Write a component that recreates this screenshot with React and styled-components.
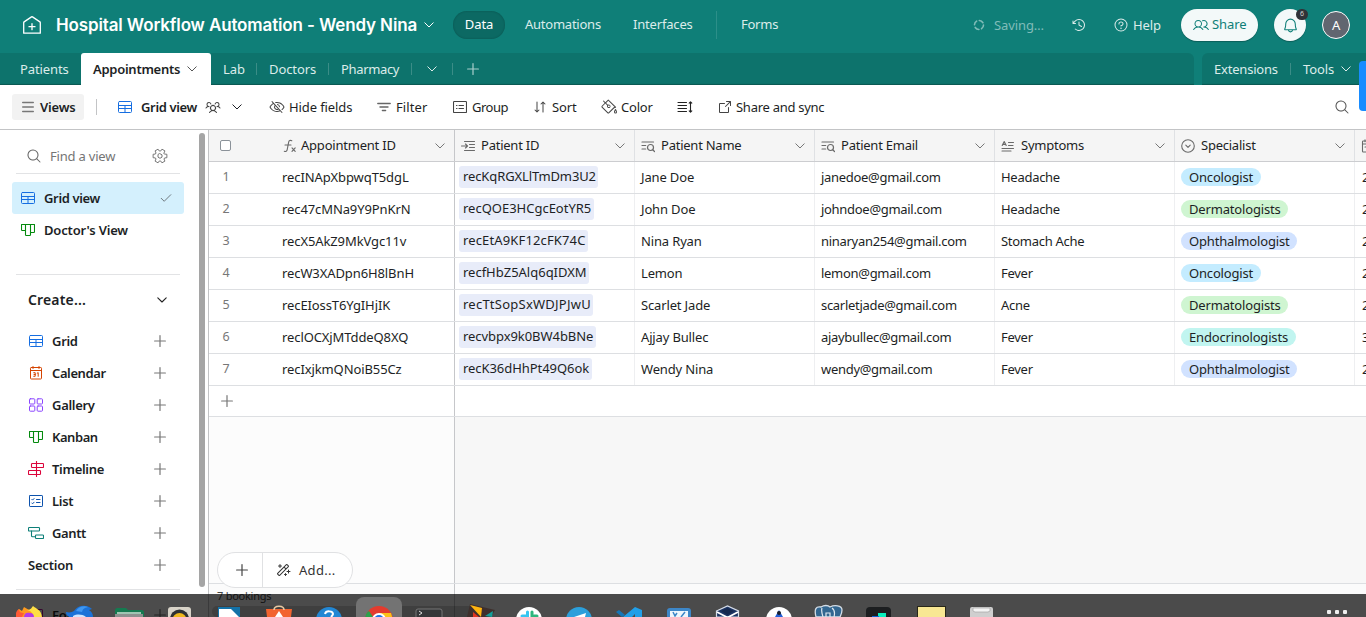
import React from "react";
import styled, { createGlobalStyle, css } from "styled-components";
import {
  PiClockCounterClockwise, PiQuestion, PiBell, PiUsers, PiUsersThree, PiEyeSlash,
  PiPaintBucket, PiMagnifyingGlass, PiArrowSquareOut, PiArrowsDownUp, PiMagicWand,
} from "react-icons/pi";

const Global = createGlobalStyle`
  * { box-sizing: border-box; }
  html, body { margin: 0; padding: 0; overflow: hidden; }
  body { font-family: "Noto Sans", "Open Sans", sans-serif; font-size: 13px; color: #1d1f25; letter-spacing: -0.1px; }
  svg { display: block; flex: none; }
`;

const Page = styled.div`
  position: relative; width: 1366px; height: 617px; overflow: hidden;
  display: flex; flex-direction: column; background: #fff;
`;
const Label = styled.span`
  white-space: nowrap; flex: none; line-height: 18px;
  font-size: ${(p) => p.$size || 13}px;
  font-weight: ${(p) => p.$weight || 400};
  letter-spacing: ${(p) => (p.$ls === undefined ? (p.$weight ? -0.17 : -0.1) : p.$ls)}px;
  padding-bottom: ${(p) => p.$pb || 0}px;
  ${(p) => p.$w && css`width: ${p.$w}px;`}
  ${(p) => p.$color && css`color: ${p.$color};`}
`;
const Gap = styled.div`flex: none; width: ${(p) => p.$w}px;`;
const Spring = styled.div`flex: 1;`;

/* ---------- top bar ---------- */
const TopBar = styled.header`
  height: 53px; flex: none; background: #0f7f78; color: #fff;
  display: flex; align-items: center; padding: 0 16px 3px 23px;
`;
const Title = styled.h1`
  margin: 0; width: 361px; white-space: nowrap; font: 600 17px/24px Inter, sans-serif; letter-spacing: -0.13px;
`;
const NavPill = styled.div`
  width: 52px; height: 28px; border-radius: 14px; background: #0c6963;
  box-shadow: inset 0 0 2px rgba(0,0,0,.25);
  display: flex; align-items: center; justify-content: center; flex: none;
`;
const VLine = styled.div`width: 1px; flex: none; height: ${(p) => p.$h}px; background: ${(p) => p.$c};`;
const ShareButton = styled.button`
  border: 0; width: 77px; height: 32px; border-radius: 16px; background: #f3f9f9; color: #0f7f78;
  font-family: inherit; display: flex; align-items: center; gap: 3px; padding: 0 0 1px 12px; flex: none;
  box-shadow: 0 1px 1px rgba(0,0,0,.25);
`;
const BellButton = styled.div`
  position: relative; width: 32px; height: 32px; border-radius: 50%; background: #f3f9f9; color: #0f7f78;
  display: flex; align-items: center; justify-content: center; flex: none; box-shadow: 0 1px 1px rgba(0,0,0,.25);
`;
const Badge = styled.span`
  position: absolute; left: 22px; top: 0; width: 12px; height: 11px; border-radius: 6px; background: #2f3338;
  color: #d5d5d5; font-size: 7px; line-height: 10px; text-align: center;
`;
const Avatar = styled.div`
  width: 28px; height: 28px; border-radius: 50%; border: 1px solid #fff; background: #616670; flex: none;
  display: flex; align-items: center; justify-content: center;
`;

/* ---------- table tabs ---------- */
const TabBar = styled.nav`height: 32px; flex: none; background: #0f7f78; display: flex; gap: 8px; color: #dcecea;`;
const TabsLeft = styled.div`
  width: 1194px; background: #0d736c; border-radius: 0 6px 0 0; display: flex; align-items: center; padding-left: 20px;
  box-shadow: inset 0 -2px 1px -1px rgba(0,0,0,.25);
`;
const TabsRight = styled.div`
  flex: 1; background: #0d736c; border-radius: 6px 0 0 0; display: flex; align-items: center; padding-left: 12px;
  box-shadow: inset 0 -2px 1px -1px rgba(0,0,0,.25);
`;
const ActiveTab = styled.div`
  width: 130px; height: 32px; background: #fff; color: #1d1f25; border-radius: 3px 3px 0 0; flex: none;
  display: flex; align-items: center; padding-left: 12px;
`;

/* ---------- toolbar ---------- */
const ToolBar = styled.div`
  height: 45px; flex: none; border-bottom: 1px solid #c3c4c6; display: flex; align-items: center; padding-left: 12px; color: #1d1f25;
`;
const ViewsButton = styled.div`
  width: 72px; height: 26px; background: #f2f2f2; border-radius: 3px; display: flex; align-items: center; padding-left: 10px; gap: 6px; flex: none;
`;
const ToolItem = styled.div`display: flex; align-items: center; flex: none; width: ${(p) => p.$w}px; gap: ${(p) => p.$gap || 5}px; svg { color: #444; }`;

/* ---------- body ---------- */
const Body = styled.div`flex: 1; display: flex; min-height: 0;`;
const Sidebar = styled.aside`
  width: 199px; flex: none; padding: 10px 15px 0 12px; overflow: hidden;
`;
const SearchRow = styled.div`height: 34px; margin: 0 4px; border-bottom: 1px solid #e2e3e5; display: flex; align-items: center; padding: 0 12px 1px 10px; color: #666;`;
const ViewRow = styled.div`
  height: 32px; border-radius: 3px; display: flex; align-items: center; gap: 9px; padding: 0 12px 0 9px;
  background: ${(p) => (p.$active ? "#d4f0fd" : "transparent")};
`;
const ViewList = styled.div`margin: 8px 4px 0; height: 93px; border-bottom: 1px solid #e2e3e5; & > div { margin: 0 -4px; }`;
const CreateHead = styled.div`height: 50px; display: flex; align-items: center; justify-content: space-between; padding: 0 17px 0 16px;`;
const CreateRow = styled.div`
  height: 32px; display: flex; align-items: center; gap: 9px; padding: 0 18px 0 ${(p) => (p.$bare ? 16 : 17)}px;
`;
const SideRule = styled.div`margin: 8px 4px 9px; height: 1px; background: #e2e3e5;`;
const ScrollTrack = styled.div`width: 9px; flex: none; padding-top: 3px;`;
const ScrollThumb = styled.div`width: 6px; height: 454px; border-radius: 3px; background: #a5a5a5;`;

/* ---------- grid ---------- */
const Grid = styled.main`
  position: relative; flex: 1; border-left: 1px solid #c3c4c6; display: flex; flex-direction: column; min-width: 0; background: #f7f7f7; overflow: hidden;
`;
const HeadRow = styled.div`height: 32px; flex: none; display: flex; background: #f5f5f5; border-bottom: 1px solid #cccdd0;`;
const Row = styled.div`height: ${(p) => p.$h || 32}px; flex: none; display: flex; background: #fff; border-bottom: 1px solid #dddfe2;`;
const LeadCell = styled.div`
  width: 246px; flex: none; display: flex; align-items: center; border-right: 1px solid #c6c7ca; padding: 0 0 ${(p) => p.$pb || 0}px ${(p) => p.$pl}px;
`;
const HeadCell = styled.div`
  width: 180px; flex: none; display: flex; align-items: center; gap: 6px; padding: 0 9px 0 6px; border-right: 1px solid #dfe1e4; color: #1d1f25;
  overflow: hidden; svg { color: #6a6a6a; }
`;
const Cell = styled.div`
  width: 180px; flex: none; display: flex; align-items: center; border-right: 1px solid #eeeff1; padding: 0 0 1px 6px; overflow: hidden;
`;
const RowNumber = styled.span`width: 34px; text-align: center; color: #777; flex: none; margin-right: 39px; font-size: 12.5px; line-height: 18px;`;
const LinkChip = styled.span`
  height: 22px; margin-left: -2px; line-height: 20px; border-radius: 3px; background: #e8ecf9; padding-left: 4px;
  width: ${(p) => p.$w}px; white-space: nowrap; letter-spacing: ${(p) => p.$ls}px;
`;
const Tag = styled.span`
  height: 18px; line-height: 18px; border-radius: 9px; background: ${(p) => p.$bg}; width: ${(p) => p.$w}px; padding-left: 8px; white-space: nowrap;
  letter-spacing: -0.17px;
`;
const CheckBox = styled.span`width: 11px; height: 11px; border: 1px solid #8b9299; border-radius: 2px; background: #fff; flex: none; margin-right: 52px;`;
const Empty = styled.div`flex: 1; display: flex;`;
const EmptyLead = styled.div`width: 246px; flex: none; background: #fcfcfc; border-right: 1px solid #c6c7ca;`;
const Footer = styled.div`height: 34px; flex: none; border-top: 1px solid #dddfe2; background: #fbfbfb; display: flex;`;
const FooterLead = styled.div`width: 246px; border-right: 1px solid #c6c7ca; padding: 2px 0 0 8px; line-height: 18px; color: #444;`;
const HScroll = styled.div`position: absolute; left: 3px; top: 476px; width: 266px; height: 11px; border-radius: 5px 0 0 5px; background: rgba(0,0,0,.16);`;
const AddPill = styled.div`
  position: absolute; left: 8px; top: 422px; width: 136px; height: 36px; border: 1px solid #e0e1e3; border-radius: 18px; background: #fff;
  display: flex; align-items: center; color: #333;
`;
const AddHalf = styled.div`height: 34px; width: 45px; border-right: 1px solid #e0e1e3; display: flex; align-items: center; padding-left: 18px; flex: none; margin-right: 12px;`;

const SideHandle = styled.div`position: absolute; right: 0; top: 61px; width: 7px; height: 50px; background: #188cff; border-radius: 4px 0 0 4px;`;

/* ---------- desktop dock ---------- */
const Dock = styled.div`
  position: absolute; left: 0; right: 0; bottom: 0; height: 23px; background: rgba(0,0,0,.7); display: flex; padding-left: 4px;
`;
const DockSlot = styled.div`
  width: 50px; height: 23px; flex: none; display: flex; justify-content: center; overflow: hidden;
`;
const DockDots = styled.div`margin-left: auto; padding: 16px 19px 0 0; display: flex; gap: 4px; & > i { width: 4px; height: 4px; border-radius: 1px; background: #eee; }`;

/* ---------- icons ---------- */
const Svg = ({ s = 16, c = "currentColor", w = 1, children, vb }) => (
  <svg width={s} height={s} viewBox={vb || "0 0 16 16"} fill="none" stroke={c} strokeWidth={w} strokeLinecap="round" strokeLinejoin="round">{children}</svg>
);
const Chevron = ({ c, w = 1 }) => (
  <svg width="10" height="6" viewBox="0 0 10 6" fill="none" stroke={c || "currentColor"} strokeWidth={w} strokeLinecap="round" strokeLinejoin="round"><path d="M.8.8 5 5 9.2.8" /></svg>
);
const Plus = ({ c = "#777", s = 12, w = 1.2 }) => (
  <svg width={s} height={s} viewBox="0 0 12 12" stroke={c} strokeWidth={w} strokeLinecap="round"><path d="M6 .6v10.8M.6 6h10.8" /></svg>
);
const Check = () => <Svg s={12} vb="0 0 12 12" c="#6f7a80"><path d="m1.200 6.300 3 3 6.600-6.600" /></Svg>;
const House = () => (
  <Svg s={18} vb="0 0 18 18" w={1.3}><path d="M.7 17.2V6.8c0-.4.1-.7.4-.9L8.5.9a.9.9 0 0 1 1 0l7.4 5c.3.2.4.5.4.9v10.4zM9 7.7v6M6 10.7h6" /></Svg>
);
const polar = (r, deg) => `${(8 + r * Math.cos((deg * Math.PI) / 180)).toFixed(2)} ${(8 + r * Math.sin((deg * Math.PI) / 180)).toFixed(2)}`;
const gearOutline = [0, 60, 120, 180, 240, 300].flatMap((a) => [polar(5, a - 23), polar(7.1, a - 14), polar(7.1, a + 14), polar(5, a + 23)]).join("L");
const Gear = () => <Svg c="#777"><path d={`M${gearOutline}z`} /><path d="M8 5.700 10 6.850v2.300L8 10.300 6 9.150v-2.300z" /></Svg>;
const GridIcon = ({ c = "#166ee1" }) => (
  <Svg s={14} vb="0 0 14 14" c={c}><rect x=".5" y="1.5" width="13" height="11" rx="1" /><path d="M.5 5.5h13M.5 8.500h13M7 5.5v7" /></Svg>
);
const KanbanIcon = () => (
  <Svg s={14} vb="0 0 14 14" c="#048a0e" w={1.1}><path d="M.5 1.5h13v7.300a.7.7 0 0 1-.7.7H9.5v2.300a.7.7 0 0 1-.7.7H5.200a.7.7 0 0 1-.7-.7V7.500H1.200a.7.7 0 0 1-.7-.7zM4.500 1.500v6M9.500 1.500v8" /></Svg>
);
const CalendarIcon = () => (
  <Svg s={14} vb="0 0 14 14" c="#d54401"><rect x="1.500" y="1.500" width="11" height="11.500" rx=".8" /><path d="M1.500 4.500h11M4 .5v2M10 .5v2M4.700 6.700h1.500v3.600H4.700M5 8.500h1.200M8.200 7.200l1-.6v3.700" /></Svg>
);
const GalleryIcon = () => (
  <Svg s={14} vb="0 0 14 14" c="#8b46ff"><rect x=".5" y=".8" width="5.300" height="5.200" rx=".8" /><rect x="8.200" y=".8" width="5.300" height="5.200" rx=".8" /><rect x=".5" y="8" width="5.300" height="5.200" rx=".8" /><rect x="8.200" y="8" width="5.300" height="5.200" rx=".8" /></Svg>
);
const TimelineIcon = () => (
  <Svg s={16} c="#dc043b" w={1.1}><path d="M8.500.5v15" /><rect x="3.500" y="2.500" width="12" height="4" rx=".8" /><rect x=".5" y="9.500" width="12" height="4" rx=".8" /></Svg>
);
const ListIcon = () => (
  <Svg s={14} vb="0 0 14 14" c="#0d52ac"><rect x=".5" y="1.500" width="13" height="11" rx=".6" /><path d="m2.800 5.300.8.8 1.500-1.600M2.800 9l.8.800 1.500-1.600M7.500 5.500h3.500M7.500 8.500h3.500" /></Svg>
);
const GanttIcon = () => (
  <Svg s={16} c="#0d7f78" w={1.1}><rect x=".5" y="2.500" width="11" height="3.500" rx=".8" /><rect x="7.500" y="10" width="8" height="3.500" rx=".8" /><path d="M3.500 6v4.800c0 .6.300 1 1 1h3" /></Svg>
);
const FilterIcon = () => <Svg s={14} vb="0 0 14 14" w={1.4} c="#666"><path d="M.8 3.500h12.400M3 7h8M5.400 10.500h3.200" /></Svg>;
const GroupIcon = () => <Svg s={14} vb="0 0 14 14" w={1.1}><rect x=".5" y="1.500" width="13" height="11" rx=".8" /><path d="M3.500 5.500h.5M3.500 8.500h.5M6 5.500h4.500M6 8.500h4.500" /></Svg>;
const HeightIcon = () => <Svg s={16} w={1.1} c="#222"><path d="M1 3.500h8.500M1 6.500h8.500M1 9.500h8.500M1 12.500h8.500M13.500 3v10M12.200 4.200l1.300-1.400 1.300 1.400M12.200 11.800l1.300 1.400 1.300-1.400" /></Svg>;
const FxIcon = () => <Svg s={14} vb="0 0 14 14" w={1.1} c="#6a6a6a"><path d="M8.800 1.700C7.200.8 5.900 1.700 5.600 3.300L4.200 10.700c-.3 1.600-1.400 2.200-2.900 1.600M2 6h6M9 8.800l3.200 3.600M12.200 8.800l-3.200 3.600" /></Svg>;
const LinkIcon = () => <Svg s={14} vb="0 0 14 14" w={1.1}><path d="M3.500 2.500h10M8.500 5.500h5M8.500 8.500h5M3.500 11.500h10M.5 7h6M4.500 5l2 2-2 2" /></Svg>;
const LookupIcon = () => <Svg s={14} vb="0 0 14 14" w={1.2}><path d="M1 3h11.500M1 6.500h3.700M1 10h3.700M12 11l1.500 1.500" /><circle cx="9.500" cy="8.500" r="3" /></Svg>;
const TextIcon = () => <Svg s={14} vb="0 0 14 14" w={1.1}><path d="M1.200 6.500 3.200 2.500l2 4M2 5.400h2.400M7.500 3.500h5M7.500 6.500h4.500M1 9.500h11.500M1 12h9" /></Svg>;
const SelectIcon = () => <Svg s={14} vb="0 0 14 14" w={1.1}><circle cx="7" cy="7" r="6.300" /><path d="m4.800 6.200 2.200 2.200 2.200-2.200" /></Svg>;
const DateIcon = () => <Svg s={14} vb="0 0 14 14" w={1.1}><rect x="1.500" y="2" width="11" height="11" rx=".8" /><path d="M1.500 5h11M4 .8v2M4 8h2" /></Svg>;
const Spinner = () => <Svg s={12} vb="0 0 12 12" w={1.600} c="#80bcb8"><circle cx="6" cy="6" r="4.500" strokeDasharray="4.200 2.800" /></Svg>;
const Menu = () => <Svg s={12} vb="0 0 12 12" w={1.400} c="#777"><path d="M.7 1.500h10.600M.7 6h10.600M.7 10.500h10.600" /></Svg>;
const FormIcon = () => <Svg s={14} vb="0 0 14 14" c="#b4159a"><rect x=".5" y="1.500" width="13" height="11" rx=".6" /></Svg>;

const Firefox = () => <svg width="40" height="23"><path d="M7 23c0-4 2-7 3-8l3 2 2-4 5 3 3-1 2 8z" fill="#ff9a1f" /><path d="M18 16c4 0 5-3 6-4 3 3 8 3 9 11h-9c0-4-2-6-6-7z" fill="#ffdf45" /><path d="M15 23c0-4 3-5 6-4 3 0 4 2 4 4z" fill="#b33be8" /><path d="M7 20c0-2 1-4 3-5 0 3 2 4 5 4l-2 4H7z" fill="#ff5a36" /></svg>;
const Bird = () => <svg width="40" height="23"><path d="M7 18c4 1 6 0 8-1 4-6 12-7 18-2l-3 1c3 2 4 4 4 7H10c-2-1-3-3-3-5z" fill="#1b72d8" /><path d="M17 17c2-4 8-6 12-4-4 1-5 2-6 5z" fill="#3f97f0" /><path d="M14 22c4-2 9-2 13 1H14z" fill="#cfe6ff" /></svg>;
const Folder = () => <svg width="40" height="23"><path d="M6 16c0-1 1-2 2-2h9l2 2h14c1 0 2 1 2 2v5H6z" fill="#157a50" /><path d="M8 18h24v5H8z" fill="#9fc5b2" /><path d="M6 20h28v3H6z" fill="#8c918f" /></svg>;
const Speaker = () => <svg width="40" height="23"><rect x="9" y="13" width="23" height="16" rx="3" fill="#d8d3c8" /><circle cx="20.500" cy="25" r="9.500" fill="#2e3134" /><circle cx="20.500" cy="26" r="7" fill="#f0b81c" /></svg>;
const Writer = () => <svg width="40" height="23"><path d="M9 13h22v10H9z" fill="#1372a8" /><path d="M10 15h12l8 8H10z" fill="#fff" /></svg>;
const Store = () => <svg width="40" height="23"><path d="M7 15h26l-1 8H8z" fill="#f26430" /><path d="M15 16c0-5 10-5 10 0" fill="none" stroke="#e8c9a2" strokeWidth="1.500" /><path d="m16 23 4-6 4 6z" fill="#fff" /></svg>;
const HelpDock = () => <svg width="40" height="23"><circle cx="20" cy="26" r="13" fill="#2287d4" /><path d="M16 20c1-4 8-3 8 0 0 1-1 2-2 3" fill="none" stroke="#fff" strokeWidth="2" /></svg>;
const Chrome = () => <svg width="50" height="23"><rect x="2" y="3" width="46" height="30" rx="8" fill="#737373" /><circle cx="25" cy="26" r="14" fill="#e33b2e" /><path d="M11 26c0-5 2-8 4-9l6 9z" fill="#2ba24c" /><path d="M25 19h12l2 7H25z" fill="#fbc116" /><circle cx="25" cy="26" r="7" fill="#fff" /><circle cx="25" cy="26" r="5" fill="#1a73e8" /></svg>;
const Terminal = () => <svg width="40" height="23"><rect x="7" y="15" width="26" height="18" rx="2" fill="#353739" stroke="#777" /><path d="m10 17 3 2-3 2" fill="none" stroke="#ddd" /></svg>;
const Blades = () => <svg width="40" height="23"><path d="m11 10 25 6-4 7H8z" fill="#3f302d" /><path d="m11 11 12 3-1 9z" fill="#ffb50f" /><path d="m14 18 6 5h-6z" fill="#e23420" /><path d="m26 22 8-5-1 6z" fill="#14a09a" /></svg>;
const Slack = () => <svg width="40" height="23"><circle cx="20" cy="26" r="13" fill="#fff" /><path d="M18.500 18v5M13 22h5" stroke="#36c5f0" strokeWidth="3" strokeLinecap="round" /><path d="M23 18v5M25 22h3" stroke="#2eb67d" strokeWidth="3" strokeLinecap="round" /></svg>;
const Telegram = () => <svg width="40" height="23"><circle cx="20" cy="26" r="13" fill="#2b9fdb" /><path d="m15 23 12-4-1 4z" fill="#fff" /></svg>;
const Code = () => <svg width="40" height="23"><path d="m7 18 3-2 6 5-3 2z" fill="#1576b8" /><path d="M26 13l7 3v7h-7v-3l-3 3h-9z" fill="#219fe8" /></svg>;
const Scan = () => <svg width="40" height="23"><rect x="8" y="14" width="24" height="18" rx="3" fill="#3d87c8" /><path d="M11 17h18v6H11z" fill="#eef6fc" /><path d="m14 18 2 4 2-3M22 23l4-5" stroke="#3d87c8" fill="none" strokeWidth="1.500" /></svg>;
const Box = () => <svg width="40" height="23"><path d="m7.500 17 11-5 11 5v6h-22z" fill="#1d3564" stroke="#d5dce8" strokeWidth="1.200" /><path d="m12 17 6.500-3 6.500 3-6.500 4z" fill="#16294f" /><path d="m8 18 10.500 5.500L29 18" fill="none" stroke="#fff" strokeWidth="1.800" /></svg>;
const Compass = () => <svg width="40" height="23"><circle cx="20" cy="26" r="13" fill="#fff" /><path d="m16 23 4-7 4 7z" fill="#2360d8" /><circle cx="20" cy="19" r="2" fill="#1a1f2c" /></svg>;
const Elephant = () => <svg width="40" height="23"><path d="M7 23c-2-8 0-11 5-10 3-2 7-2 9 0 4-2 12-2 12 3 0 3-1 5-2 7z" fill="#336791" stroke="#d4dde6" strokeWidth="1.300" /><path d="M13 14c-1 3 0 6 1 9M23 14c3 2 3 5 2 9M17 23v-4h4v4" fill="none" stroke="#e0e8ef" strokeWidth="1.200" /></svg>;
const Dark = () => <svg width="40" height="23"><rect x="7" y="13" width="25" height="18" rx="4" fill="#1c1e20" /><path d="M19 19h8v4h-8z" fill="#09f0bd" /><path d="M13 22h7v1h-7z" fill="#0c63d8" /></svg>;
const Note = () => <svg width="40" height="23"><path d="M8 12h29v11H8z" fill="#282719" /><path d="M9 13h27v10H9z" fill="#f8e793" /></svg>;
const Drive = () => <svg width="40" height="23"><rect x="11" y="13" width="23" height="16" rx="2" fill="#cfcfcf" /><path d="M14 14h17v3l-2 1H16l-2-1z" fill="#f4f4f4" stroke="#a4a4a4" strokeWidth=".7" /></svg>;

const dockApps = [Firefox, Bird, Folder, Speaker, Writer, Store, HelpDock, Chrome, Terminal, Blades, Slack, Telegram, Code, Scan, Box, Compass, Elephant, Dark, Note, Drive];

/* ---------- data ---------- */
const tagColors = { Oncologist: ["#c4ecff", 80], Dermatologists: ["#cff5d1", 107], Ophthalmologist: ["#d1e2ff", 116], Endocrinologists: ["#c1f5f0", 115] };
const rows = [
  ["recINApXbpwqT5dgL", "recKqRGXLlTmDm3U2", 139, "Jane Doe", "janedoe@gmail.com", "Headache", "Oncologist", "2", -0.2],
  ["rec47cMNa9Y9PnKrN", "recQOE3HCgcEotYR5", 135, "John Doe", "johndoe@gmail.com", "Headache", "Dermatologists", "2", -0.1],
  ["recX5AkZ9MkVgc11v", "recEtA9KF12cFK74C", 129, "Nina Ryan", "ninaryan254@gmail.com", "Stomach Ache", "Ophthalmologist", "2", 0.05],
  ["recW3XADpn6H8lBnH", "recfHbZ5Alq6qIDXM", 130, "Lemon", "lemon@gmail.com", "Fever", "Oncologist", "2", -0.1],
  ["recEIossT6YgIHjIK", "recTtSopSxWDJPJwU", 134, "Scarlet Jade", "scarletjade@gmail.com", "Acne", "Dermatologists", "2", 0.15],
  ["reclOCXjMTddeQ8XQ", "recvbpx9k0BW4bBNe", 137, "Ajjay Bullec", "ajaybullec@gmail.com", "Fever", "Endocrinologists", "3", -0.15],
  ["recIxjkmQNoiB55Cz", "recK36dHhPt49Q6ok", 133, "Wendy Nina", "wendy@gmail.com", "Fever", "Ophthalmologist", "2", -0.15],
];
const columns = [["Patient ID", LinkIcon], ["Patient Name", LookupIcon], ["Patient Email", LookupIcon], ["Symptoms", TextIcon], ["Specialist", SelectIcon]];
const creators = [["Grid", GridIcon], ["Calendar", CalendarIcon, -0.4], ["Gallery", GalleryIcon], ["Kanban", KanbanIcon, -0.45], ["Timeline", TimelineIcon], ["List", ListIcon], ["Gantt", GanttIcon, -0.4]];
const IconSlot = styled.span`width: 14px; display: flex; justify-content: center; flex: none;`;

export default function App() {
  return (
    <Page>
      <Global />
      <TopBar>
        <House /><Gap $w={15} />
        <Title>Hospital Workflow Automation - Wendy Nina</Title>
        <Gap $w={7} /><Chevron /><Gap $w={19} />
        <NavPill><Label $pb={2}>Data</Label></NavPill><Gap $w={20} />
        <Label $w={108} $pb={2} $ls={-0.24} $color="#dcecea">Automations</Label>
        <Label $w={83} $pb={2} $ls={-0.18} $color="#dcecea">Interfaces</Label>
        <VLine $h={28} $c="#2c8f89" /><Gap $w={24} />
        <Label $pb={2} $ls={-0.25} $color="#dcecea">Forms</Label>
        <Spring />
        <Spinner /><Gap $w={9} />
        <Label $w={77} $color="#80bcb8">Saving…</Label>
        <PiClockCounterClockwise size={16} color="#dcecea" /><Gap $w={26} />
        <PiQuestion size={16} color="#dcecea" /><Gap $w={4} />
        <Label $w={48} $color="#dcecea">Help</Label>
        <ShareButton><PiUsers size={16} /><Label $pb={1}>Share</Label></ShareButton><Gap $w={16} />
        <BellButton><PiBell size={17} /><Badge>6</Badge></BellButton><Gap $w={16} />
        <Avatar><Label>A</Label></Avatar>
      </TopBar>
      <TabBar>
        <TabsLeft>
          <Label $w={61}>Patients</Label>
          <ActiveTab><Label $w={94} $ls={-0.27} $weight={600}>Appointments</Label><Chevron c="#555" /></ActiveTab>
          <Gap $w={12} /><Label $w={33}>Lab</Label><VLine $h={12} $c="#3b8d87" />
          <Gap $w={12} /><Label $w={59}>Doctors</Label><VLine $h={12} $c="#3b8d87" />
          <Gap $w={12} /><Label $w={70} $ls={-0.35}>Pharmacy</Label><VLine $h={12} $c="#3b8d87" />
          <Gap $w={15} /><Chevron /><Gap $w={15} /><VLine $h={12} $c="#3b8d87" />
          <Gap $w={14} /><Plus c="#a9cfcc" />
        </TabsLeft>
        <TabsRight>
          <Label $w={76} $ls={-0.2}>Extensions</Label><VLine $h={12} $c="#3b8d87" /><Gap $w={12} /><Label $w={38}>Tools</Label><Chevron />
        </TabsRight>
      </TabBar>
      <ToolBar>
        <ViewsButton><Menu /><Label $weight={600}>Views</Label></ViewsButton>
        <Gap $w={12} /><VLine $h={16} $c="#c3c4c6" /><Gap $w={21} />
        <GridIcon /><Gap $w={9} /><Label $w={64} $ls={-0.35} $weight={600}>Grid view</Label>
        <PiUsersThree size={16} color="#444" /><Gap $w={11} /><Chevron /><Gap $w={27} />
        <ToolItem $w={108} $gap={4}><PiEyeSlash size={16} /><Label>Hide fields</Label></ToolItem>
        <ToolItem $w={76}><FilterIcon /><Label $ls={0.1}>Filter</Label></ToolItem>
        <ToolItem $w={79}><GroupIcon /><Label $ls={-0.5}>Group</Label></ToolItem>
        <ToolItem $w={69} $gap={4}><PiArrowsDownUp size={16} /><Label>Sort</Label></ToolItem>
        <ToolItem $w={76} $gap={4}><PiPaintBucket size={16} /><Label $ls={-0.2}>Color</Label></ToolItem>
        <ToolItem $w={40}><HeightIcon /></ToolItem>
        <ToolItem $w={120} $gap={3}><PiArrowSquareOut size={16} /><Label $ls={-0.27}>Share and sync</Label></ToolItem>
        <Spring /><PiMagnifyingGlass size={16} color="#555" /><Gap $w={16} />
      </ToolBar>
      <Body>
        <Sidebar>
          <SearchRow>
            <PiMagnifyingGlass size={16} /><Gap $w={8} /><Label $color="#757575" $ls={-0.2} $pb={1}>Find a view</Label><Spring /><Gear />
          </SearchRow>
          <ViewList>
            <ViewRow $active><GridIcon /><Label $weight={600} $ls={-0.35}>Grid view</Label><Spring /><Check /></ViewRow>
            <ViewRow><KanbanIcon /><Label $weight={600}>Doctor's View</Label></ViewRow>
          </ViewList>
          <CreateHead><Label $size={14} $weight={600} $ls={0.15}>Create...</Label><Chevron c="#222" w={1.1} /></CreateHead>
          {creators.map(([name, Icon, ls = -0.3]) => (
            <CreateRow key={name}><IconSlot><Icon /></IconSlot><Label $weight={600} $ls={ls}>{name}</Label><Spring /><Plus /></CreateRow>
          ))}
          <CreateRow $bare><Label $weight={600} $ls={-0.2}>Section</Label><Spring /><Plus /></CreateRow>
          <SideRule />
          <CreateRow><IconSlot><FormIcon /></IconSlot><Label $weight={600}>Form</Label><Spring /><Plus /></CreateRow>
        </Sidebar>
        <ScrollTrack><ScrollThumb /></ScrollTrack>
        <Grid>
          <HeadRow>
            <LeadCell $pl={11}><CheckBox /><IconSlot><FxIcon /></IconSlot><Gap $w={4} /><Label $pb={1} $ls={-0.22}>Appointment ID</Label><Spring /><Chevron c="#777" /><Gap $w={9} /></LeadCell>
            {columns.map(([name, Icon]) => (
              <HeadCell key={name}><Icon /><Label $pb={1} $ls={-0.24}>{name}</Label><Spring /><Chevron c="#777" /></HeadCell>
            ))}
            <HeadCell><DateIcon /></HeadCell>
          </HeadRow>
          {rows.map((r, i) => (
            <Row key={r[0]}>
              <LeadCell $pl={0} $pb={1}><RowNumber>{i + 1}</RowNumber><Label>{r[0]}</Label></LeadCell>
              <Cell><LinkChip $w={r[2]} $ls={r[8] + 0.09}>{r[1]}</LinkChip></Cell>
              <Cell><Label $ls={-0.15}>{r[3]}</Label></Cell>
              <Cell><Label $ls={-0.3}>{r[4]}</Label></Cell>
              <Cell><Label $ls={-0.28}>{r[5]}</Label></Cell>
              <Cell><Tag $bg={tagColors[r[6]][0]} $w={tagColors[r[6]][1]}>{r[6]}</Tag></Cell>
              <Cell><Gap $w={1} /><Label>{r[7]}</Label></Cell>
            </Row>
          ))}
          <Row $h={31}><LeadCell $pl={12}><Plus /></LeadCell></Row>
          <Empty><EmptyLead /></Empty>
          <Footer><FooterLead><Label $size={11} $ls={-0.25}>7 bookings</Label></FooterLead></Footer>
          <HScroll />
          <AddPill><AddHalf><Plus c="#444" /></AddHalf><PiMagicWand size={16} /><Gap $w={8} /><Label $ls={0.3}>Add...</Label></AddPill>
        </Grid>
      </Body>
      <SideHandle />
      <Dock>
        {dockApps.map((Icon, i) => <DockSlot key={i}><Icon /></DockSlot>)}
        <DockDots><i /><i /><i /></DockDots>
      </Dock>
    </Page>
  );
}
